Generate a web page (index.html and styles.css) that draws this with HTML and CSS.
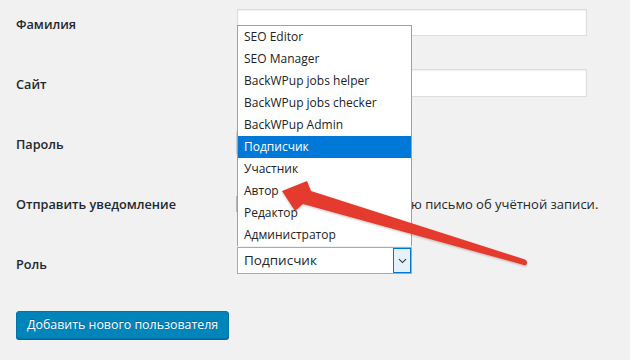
FILE: index.html
```html
<!DOCTYPE html>
<html lang="ru">
<head>
<meta charset="utf-8">
<title>Добавить пользователя</title>
<link rel="stylesheet" href="styles.css">
</head>
<body>
<div class="page">
  <div class="row">
    <div class="label">Фамилия</div>
    <div class="field"><div class="input"></div></div>
  </div>
  <div class="row">
    <div class="label">Сайт</div>
    <div class="field"><div class="input input-tall"></div></div>
  </div>
  <div class="row">
    <div class="label">Пароль</div>
    <div class="field"><div class="pw-button"></div></div>
  </div>
  <div class="row">
    <div class="label">Отправить уведомление</div>
    <div class="field field-notify"><span class="checkbox"></span><span class="notify-text">Отправить пользователю письмо об учётной записи.</span></div>
  </div>
  <div class="row">
    <div class="label">Роль</div>
    <div class="field field-select">
      <div class="select">
        <span class="select-value">Подписчик</span>
        <span class="select-arrow">
          <svg width="9" height="6" viewBox="0 0 9 6"><path d="M1 1.2 L4.5 4.6 L8 1.2" fill="none" stroke="#333" stroke-width="1.1"/></svg>
        </span>
      </div>
    </div>
  </div>
  <div class="submit"><span class="button">Добавить нового пользователя</span></div>

  <ul class="dropdown">
    <li>SEO Editor</li>
    <li>SEO Manager</li>
    <li>BackWPup jobs helper</li>
    <li>BackWPup jobs checker</li>
    <li>BackWPup Admin</li>
    <li class="selected">Подписчик</li>
    <li>Участник</li>
    <li>Автор</li>
    <li>Редактор</li>
    <li>Администратор</li>
  </ul>

  <svg class="arrow" width="630" height="360" viewBox="0 0 630 360">
    <defs>
      <filter id="sh" x="-10%" y="-10%" width="120%" height="130%">
        <feDropShadow dx="0" dy="1" stdDeviation="1" flood-color="#000" flood-opacity="0.25"/>
      </filter>
    </defs>
    <path d="M282 191 L307 181 L311 191 L525 259.5 Q529 262 525.5 265.5 L303 204 L295 211 Z" fill="#e53a2e" filter="url(#sh)"/>
  </svg>
</div>
</body>
</html>
```

FILE: styles.css
```css
html, body {
  margin: 0;
  padding: 0;
}
body {
  background: #f1f1f1;
  font-family: "Open Sans", "Noto Sans", sans-serif;
  color: #23282d;
  width: 630px;
  height: 360px;
  overflow: hidden;
}
.page {
  position: relative;
  padding-left: 16px;
  height: 360px;
}
.row {
  display: flex;
  height: 60px;
}
.label {
  width: 221px;
  flex: none;
  font-size: 12.7px;
  font-weight: 600;
  line-height: 20px;
  padding-top: 14px;
  color: #23282d;
}
.field {
  padding-top: 9px;
}
.input {
  width: 350px;
  height: 27px;
  box-sizing: border-box;
  border: 1px solid #ddd;
  background: #fff;
  box-shadow: inset 0 1px 2px rgba(0,0,0,0.07);
}
.input-tall {
  height: 28px;
}
.pw-button {
  margin-top: 1px;
  margin-left: -1px;
  width: 150px;
  height: 26px;
  box-sizing: border-box;
  border: 1px solid #ccc;
  background: #f7f7f7;
  border-radius: 3px;
}
.field-notify {
  padding-top: 15px;
  display: flex;
  align-items: center;
  height: 18px;
}
.checkbox {
  width: 16px;
  height: 16px;
  margin-left: -1px;
  box-sizing: border-box;
  border: 1px solid #b4b9be;
  background: #fff;
  flex: none;
}
.notify-text {
  margin-left: 6px;
  font-size: 13px;
  color: #23282d;
  white-space: nowrap;
}
.field-select {
  padding-top: 7px;
}
.select {
  width: 175px;
  height: 27px;
  box-sizing: border-box;
  border: 1px solid #7eb4ea;
  background: #fff;
  display: flex;
  align-items: stretch;
}
.select-value {
  flex: 1;
  padding-left: 6px;
  font-size: 13.5px;
  line-height: 25px;
  color: #23282d;
}
.select-arrow {
  width: 18px;
  box-sizing: border-box;
  border: 1px solid #0078d7;
  background: #e5f1fb;
  display: flex;
  align-items: center;
  justify-content: center;
}
.submit {
  padding-top: 11px;
}
.button {
  display: inline-block;
  height: 28px;
  box-sizing: border-box;
  padding: 0 10px;
  background: #0085ba;
  border: 1px solid #0073aa;
  box-shadow: 0 1px 0 #006799;
  border-radius: 3px;
  color: #fff;
  font-size: 12.4px;
  line-height: 26px;
  text-shadow: 0 -1px 1px #006799;
}
.dropdown {
  position: absolute;
  left: 237px;
  top: 25px;
  width: 175px;
  margin: 0;
  padding: 0;
  list-style: none;
  box-sizing: border-box;
  border: 1px solid #a0a0a0;
  border-bottom: 0;
  background: #fff;
}
.dropdown li {
  height: 22px;
  line-height: 22px;
  padding-left: 6px;
  font-size: 12px;
  color: #222;
  white-space: nowrap;
}
.dropdown li.selected {
  background: #0078d7;
  color: #fff;
}
.arrow {
  position: absolute;
  left: 0;
  top: 0;
  pointer-events: none;
}
```
